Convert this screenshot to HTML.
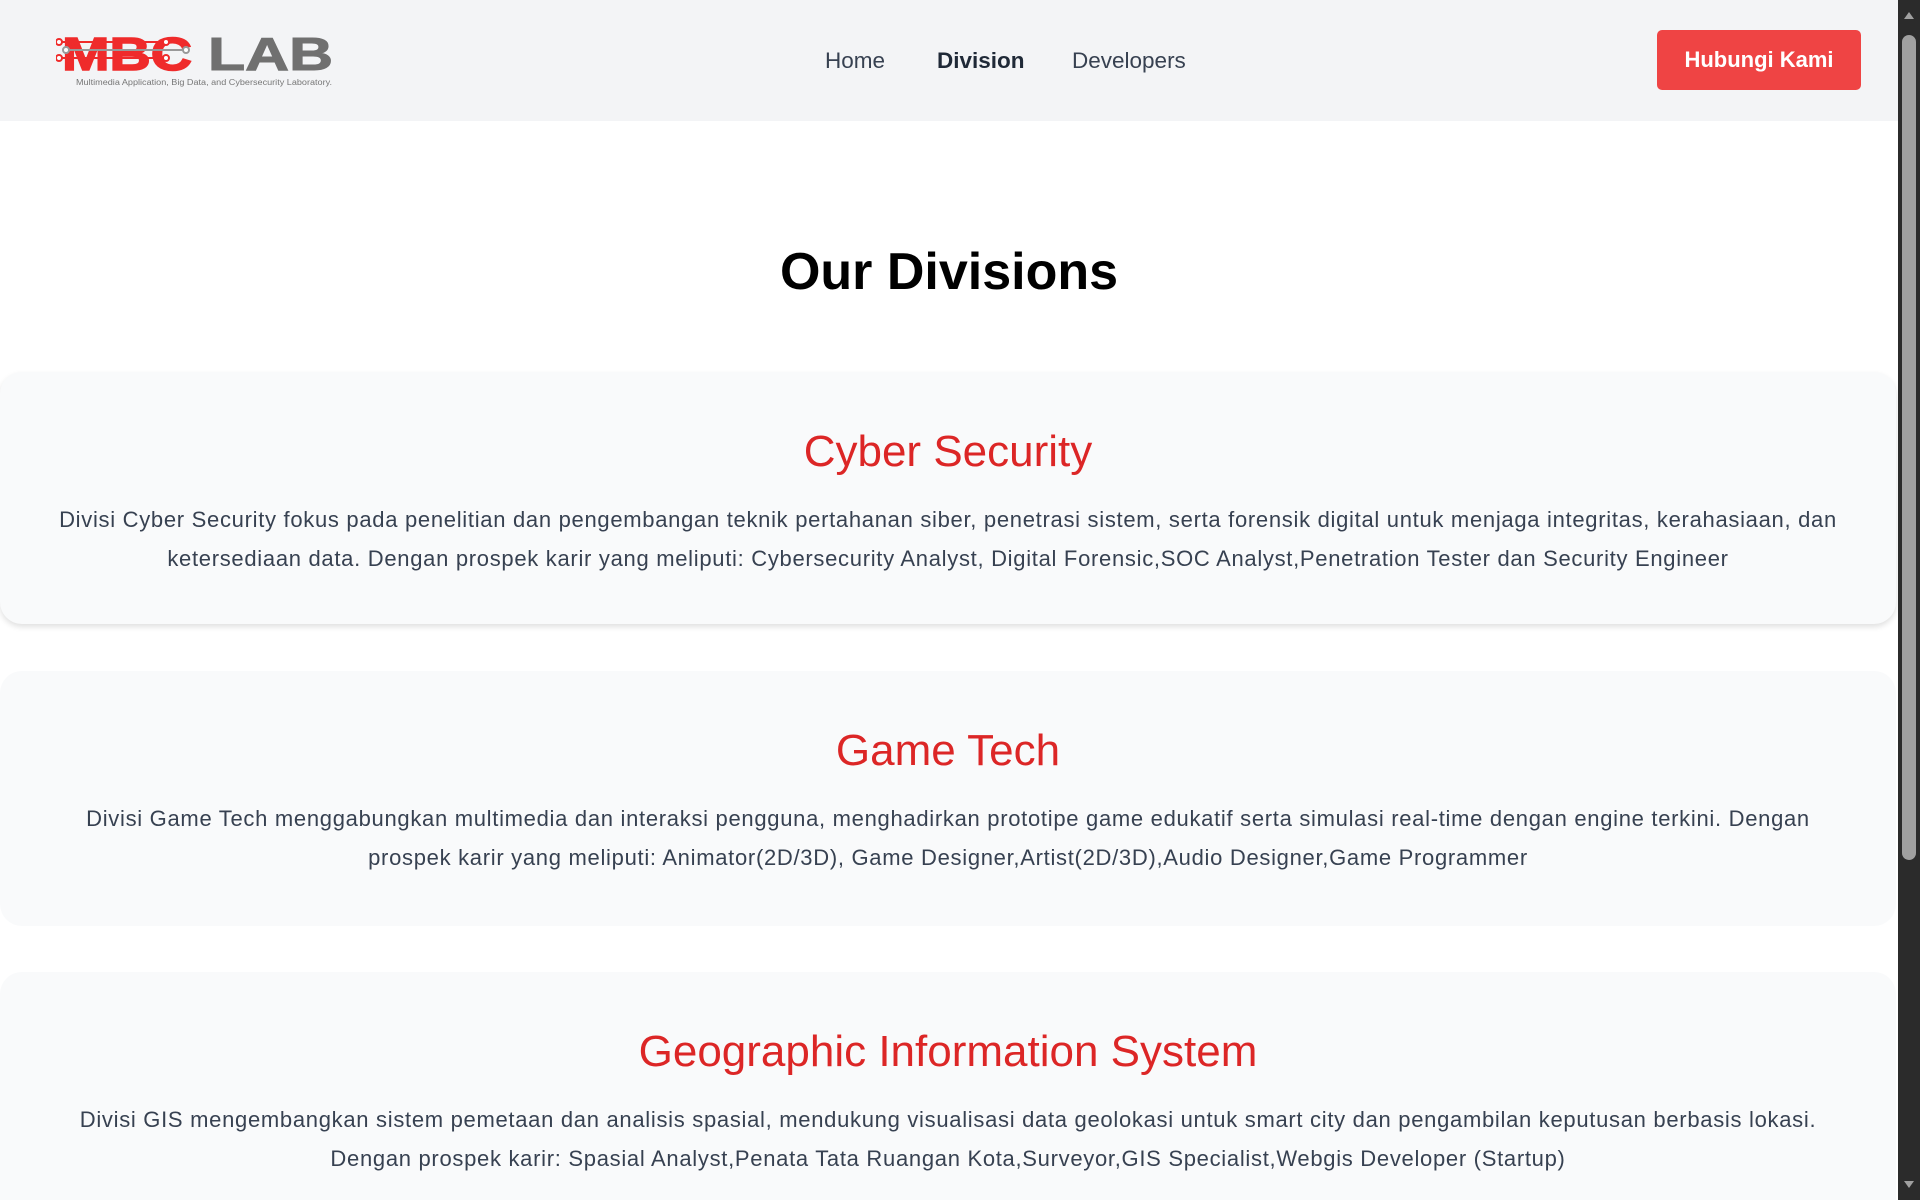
<!DOCTYPE html>
<html><head><meta charset="utf-8"><style>
*{margin:0;padding:0;box-sizing:border-box}
body{width:1920px;height:1200px;overflow:hidden;background:#fff;font-family:"Liberation Sans",sans-serif;position:relative}
.main{width:1898px;position:absolute;left:0;top:0;height:1200px;overflow:hidden}
header{height:121px;background:#f3f4f6;position:relative}
nav a{position:absolute;top:48px;font-size:22.5px;color:#374151;text-decoration:none}
.btn{position:absolute;left:1657px;top:30px;width:204px;height:60px;background:#ef4444;border-radius:5px;color:#fff;font-size:22px;font-weight:bold;text-align:center;line-height:60px}
h1{position:absolute;top:242px;width:100%;text-align:center;font-size:52px;font-weight:bold;color:#000}
.card{position:absolute;left:0;width:1896px;background:#f9fafb;border-radius:22px;text-align:center;padding:0 10px}
.card h2{color:#dc2626;font-size:44px;font-weight:normal;margin-top:50px;height:78px;line-height:60px}
.card p{color:#374151;font-size:22px;line-height:39px;white-space:nowrap;letter-spacing:0.7px}
.sb{position:absolute;right:0;top:0;width:22px;height:1200px;background:#2b2b2b}
.thumb{position:absolute;left:4px;top:35px;width:14px;height:825px;background:#a0a0a0;border-radius:7px}
</style></head><body>
<div class="main">
<header>
<svg width="300" height="80" style="position:absolute;left:56px;top:24px" viewBox="0 0 300 80">
<text x="6" y="46" font-family="Liberation Sans" font-weight="bold" font-size="46" fill="#ef2b2b" stroke="#ef2b2b" stroke-width="1.5" textLength="130" lengthAdjust="spacingAndGlyphs">MBC</text>
<g stroke="#ef2b2b" stroke-width="2" fill="#fff"><line x1="2" y1="18" x2="110" y2="18"/><line x1="2" y1="34" x2="110" y2="34"/><circle cx="3" cy="18" r="3"/><circle cx="3" cy="34" r="3"/><circle cx="110" cy="18" r="3"/><circle cx="110" cy="34" r="3"/></g>
<g stroke="#999" stroke-width="2" fill="#fff"><line x1="10" y1="26" x2="130" y2="26"/><circle cx="10" cy="26" r="3"/><circle cx="130" cy="26" r="3"/></g>
<text x="152" y="46" font-family="Liberation Sans" font-weight="bold" font-size="46" fill="#707070" stroke="#707070" stroke-width="1" textLength="125" lengthAdjust="spacingAndGlyphs">LAB</text>
<text x="20" y="61" font-family="Liberation Sans" font-size="8" fill="#777" textLength="256" lengthAdjust="spacingAndGlyphs">Multimedia  Application, Big Data, and Cybersecurity Laboratory.</text>
</svg>
<nav><a style="left:825px">Home</a><a style="left:937px;font-weight:bold;color:#1f2937">Division</a><a style="left:1072px">Developers</a></nav>
<div class="btn">Hubungi Kami</div>
</header>
<h1>Our Divisions</h1>
<div class="card" style="top:372px;height:252px;box-shadow:0 3px 6px rgba(0,0,0,.12)">
<h2>Cyber Security</h2>
<p>Divisi Cyber Security fokus pada penelitian dan pengembangan teknik pertahanan siber, penetrasi sistem, serta forensik digital untuk menjaga integritas, kerahasiaan, dan<br>ketersediaan data. Dengan prospek karir yang meliputi: Cybersecurity Analyst, Digital Forensic,SOC Analyst,Penetration Tester dan Security Engineer</p></div>
<div class="card" style="top:671px;height:255px">
<h2>Game Tech</h2>
<p>Divisi Game Tech menggabungkan multimedia dan interaksi pengguna, menghadirkan prototipe game edukatif serta simulasi real-time dengan engine terkini. Dengan<br>prospek karir yang meliputi: Animator(2D/3D), Game Designer,Artist(2D/3D),Audio Designer,Game Programmer</p></div>
<div class="card" style="top:972px;height:260px">
<h2>Geographic Information System</h2>
<p>Divisi GIS mengembangkan sistem pemetaan dan analisis spasial, mendukung visualisasi data geolokasi untuk smart city dan pengambilan keputusan berbasis lokasi.<br>Dengan prospek karir: Spasial Analyst,Penata Tata Ruangan Kota,Surveyor,GIS Specialist,Webgis Developer (Startup)</p></div>
</div>
<div class="sb"><div style="position:absolute;left:6px;top:12px;width:0;height:0;border-left:5px solid transparent;border-right:5px solid transparent;border-bottom:7px solid #a0a0a0"></div><div class="thumb"></div><div style="position:absolute;left:6px;bottom:12px;width:0;height:0;border-left:5px solid transparent;border-right:5px solid transparent;border-top:7px solid #a0a0a0"></div></div>
</body></html>
